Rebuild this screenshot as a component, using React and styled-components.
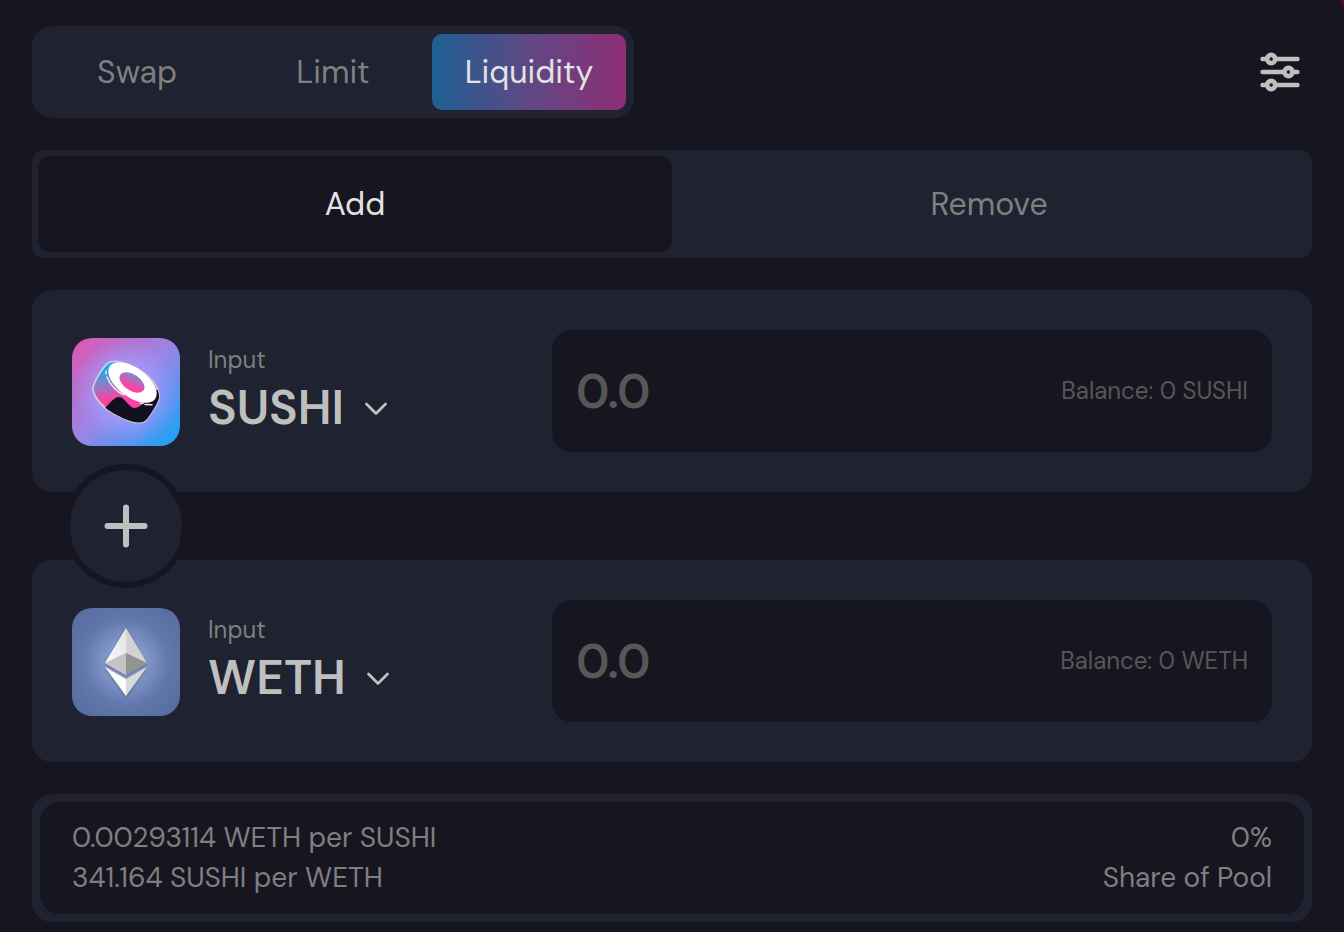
import React, { useState } from 'react';
import styled, { createGlobalStyle } from 'styled-components';

const GlobalStyle = createGlobalStyle`
  * {
    box-sizing: border-box;
  }

  body {
    background: linear-gradient(to right, #100d2a, #46083f);
    margin: 0;
  }

  button,
  input {
    background: none;
    border: 0;
    color: inherit;
    font: inherit;
    margin: 0;
    padding: 0;
  }

  button {
    cursor: pointer;
  }
`;

const Page = styled.main`
  background: #171520;
  border-radius: 4px 8px 0 0 / 6px 12px 0 0;
  color: #7f7f7f;
  display: flex;
  flex-direction: column;
  font-family: 'DM Sans', Inter, 'Liberation Sans', sans-serif;
  font-size: 28px;
  gap: 32px;
  line-height: 40px;
  min-height: 100vh;
  padding: 26px 32px 10px;
`;

const Header = styled.header`
  align-items: center;
  display: flex;
  justify-content: space-between;
`;

const Nav = styled.nav`
  background: #1f2230;
  border-radius: 20px;
  display: grid;
  gap: 2px;
  grid-template-columns: repeat(3, 1fr);
  padding: 8px;
`;

const NavLink = styled.a`
  background: ${({ $active }) =>
    $active ? 'linear-gradient(to right, #1f6093, #5f4783 50%, #8f2f76)' : 'none'};
  border-radius: 10px;
  color: ${({ $active }) => ($active ? '#e3e3e3' : '#7f7f7f')};
  font-size: 32px;
  min-width: 194px;
  padding: 18px 24px;
  text-align: center;
  text-decoration: none;
`;

const SettingsButton = styled.button`
  color: #bfbfbf;
  display: flex;
  padding: 12px;
`;

const ModeSwitch = styled.div`
  background: #1f2230;
  border-radius: 12px;
  display: grid;
  grid-template-columns: 1fr 1fr;
  padding: 6px;
`;

const ModeButton = styled.button`
  background: ${({ $active }) => ($active ? '#171520' : 'none')};
  border-radius: 12px;
  color: ${({ $active }) => ($active ? '#e3e3e3' : '#7f7f7f')};
  font-size: 32px;
  padding: 28px;
`;

const Panels = styled.div`
  display: flex;
  flex-direction: column;
`;

const Panel = styled.section`
  align-items: start;
  background: #1f2230;
  border-radius: 20px;
  display: grid;
  grid-template-columns: minmax(0, 2fr) minmax(0, 3fr);
  padding: 40px;
`;

const Asset = styled.div`
  align-items: center;
  display: flex;
  gap: 28px;
  padding-top: 8px;
`;

const AssetText = styled.div`
  display: flex;
  flex-direction: column;
`;

const AssetLabel = styled.span`
  font-size: 24px;
  line-height: 32px;
`;

const AssetButton = styled.button`
  align-items: center;
  color: #bfbfbf;
  display: flex;
  font-size: 48px;
  font-weight: 600;
  gap: 20px;
  line-height: 64px;
`;

const Field = styled.label`
  align-items: center;
  background: #171520;
  border-radius: 20px;
  display: flex;
  gap: 16px;
  padding: 29px 24px;
`;

const AmountInput = styled.input`
  color: #bfbfbf;
  flex: 1;
  font-size: 48px;
  font-weight: 600;
  height: 64px;
  min-width: 0;
  outline: none;

  &::placeholder {
    color: #575757;
    opacity: 1;
  }
`;

const Balance = styled.span`
  color: #575757;
  font-size: 24px;
  white-space: nowrap;
`;

const PlusButton = styled.button`
  align-items: center;
  background: #1f2230;
  border: 6px solid #171520;
  border-radius: 50%;
  color: #bfbfbf;
  display: flex;
  height: 124px;
  justify-content: center;
  margin: -28px 32px;
  width: 124px;
  z-index: 1;
`;

const Rates = styled.footer`
  background: #1f2230;
  border-radius: 20px;
  padding: 8px;
`;

const RatesInner = styled.div`
  background: #171520;
  border-radius: 20px;
  display: flex;
  justify-content: space-between;
  padding: 16px 32px;
`;

const RatesColumn = styled.div`
  text-align: ${({ $align }) => $align || 'left'};
`;

const Logo = styled.svg`
  border-radius: 20px;
  flex: none;
`;

const SlidersIcon = () => (
  <svg width="40" height="40" viewBox="0 0 40 40" fill="none" stroke="currentColor" strokeWidth="4.6" strokeLinecap="round" aria-hidden="true">
    <path d="M2.600 7h4.400M15 7h22.400M2.600 20h21.400M32 20h5.400M2.600 33h4.400M15 33h22.400" />
    <circle cx="11.2" cy="7" r="4.1" />
    <circle cx="28.5" cy="20" r="4.1" />
    <circle cx="11.2" cy="33" r="4.1" />
  </svg>
);

const ChevronIcon = () => (
  <svg width="24" height="16" viewBox="0 0 24 16" fill="none" stroke="currentColor" strokeWidth="2.8" strokeLinecap="round" strokeLinejoin="round" aria-hidden="true">
    <path d="M2.5 4 12 13.500 21.500 4" />
  </svg>
);

const PlusIcon = () => (
  <svg width="44" height="44" viewBox="0 0 44 44" fill="none" stroke="currentColor" strokeWidth="6" strokeLinecap="round" aria-hidden="true">
    <path d="M22 3.500v37M3.500 22h37" />
  </svg>
);

const SushiLogo = () => (
  <Logo width="108" height="108" viewBox="0 0 108 108" aria-hidden="true">
    <defs>
      <linearGradient id="sushi-bg" x1="0" y1="0" x2="1" y2="1">
        <stop offset="0" stopColor="#e055b0" />
        <stop offset="0.5" stopColor="#9a85e4" />
        <stop offset="1" stopColor="#0fa6f6" />
      </linearGradient>
      <radialGradient id="sushi-glow">
        <stop offset="0" stopColor="#b0a8ff" />
        <stop offset="0.5" stopColor="#a5a0ff" stopOpacity="0.7" />
        <stop offset="1" stopColor="#9a98ff" stopOpacity="0" />
      </radialGradient>
      <linearGradient id="sushi-side" x1="0.3" y1="0" x2="0.45" y2="0.75">
        <stop offset="0.1" stopColor="#08aff0" />
        <stop offset="0.45" stopColor="#8a80c8" />
        <stop offset="0.8" stopColor="#ff40a0" />
      </linearGradient>
      <linearGradient id="sushi-hole" x1="0.3" y1="0" x2="0.6" y2="1">
        <stop offset="0.1" stopColor="#8585c8" />
        <stop offset="0.75" stopColor="#fa45a2" />
      </linearGradient>
      <clipPath id="sushi-body">
        <path d="M36 25C42 21 57 25 69 33C80 40 88 51 87 60C85 67 78 77 74 82C68 88 53 82 41 75C29 68 21 58 21 50C22 44 30 30 36 25Z" />
      </clipPath>
    </defs>
    <path fill="url(#sushi-bg)" d="M0 0h108v108H0z" />
    <circle cx="54" cy="54" r="54" fill="url(#sushi-glow)" />
    <path fill="url(#sushi-side)" stroke="#d2c9dc" strokeWidth="1.800" d="M36 25C42 21 57 25 69 33C80 40 88 51 87 60C85 67 78 77 74 82C68 88 53 82 41 75C29 68 21 58 21 50C22 44 30 30 36 25Z" />
    <path clipPath="url(#sushi-body)" fill="#11101f" d="M33 70C38 65 42 59 47 59C53 59 56 69 62 70C69 70 70 63 76 64C82 64 85 59 84 52H91V92H30Z" />
    <ellipse cx="60.500" cy="44.500" rx="28" ry="14.500" transform="rotate(36 60.500 44.500)" fill="#fff" />
    <ellipse cx="60" cy="44.500" rx="14" ry="8" transform="rotate(33 60 44.500)" fill="url(#sushi-hole)" />
    <path d="M34 33v3M35 39C38 47 45 54 52 57M68 65l3 .5M73 66.500l7 .2" fill="none" stroke="#f5dff0" strokeWidth="1.500" strokeLinecap="round" />
  </Logo>
);

const EthLogo = () => (
  <Logo width="108" height="108" viewBox="0 0 108 108" aria-hidden="true">
    <defs>
      <radialGradient id="eth-bg" r="0.72">
        <stop offset="0" stopColor="#9fb2de" />
        <stop offset="0.25" stopColor="#8399ca" />
        <stop offset="0.55" stopColor="#6278ad" />
        <stop offset="1" stopColor="#536899" />
      </radialGradient>
      <linearGradient id="eth-left" x1="0" y1="1" x2="1" y2="0">
        <stop offset="0" stopColor="#fff" />
        <stop offset="1" stopColor="#e2e2e2" />
      </linearGradient>
      <filter id="eth-shadow" x="-0.3" y="-0.3" width="1.6" height="1.6">
        <feDropShadow dx="0" dy="1" stdDeviation="1" floodColor="#2d3d66" floodOpacity="0.7" />
      </filter>
    </defs>
    <path fill="url(#eth-bg)" d="M0 0h108v108H0z" />
    <g filter="url(#eth-shadow)">
      <path fill="url(#eth-left)" d="M54 20 33 55l21 12z" />
      <path fill="#d3d3d3" d="m54 20 21 35-21 12z" />
      <path fill="#c4c4c4" d="m33 55 21-10v22z" />
      <path fill="#929292" d="M75 55 54 45v22z" />
      <path fill="#fafafa" d="m33 59 21 12v17z" />
      <path fill="#d9d9d9" d="M75 59 54 71v17z" />
    </g>
  </Logo>
);

const tabs = ['Swap', 'Limit', 'Liquidity'];
const modes = ['Add', 'Remove'];

const CurrencyPanel = ({ symbol, logo }) => {
  const [amount, setAmount] = useState('');

  return (
    <Panel>
      <Asset>
        {logo}
        <AssetText>
          <AssetLabel>Input</AssetLabel>
          <AssetButton type="button">
            {symbol}
            <ChevronIcon />
          </AssetButton>
        </AssetText>
      </Asset>
      <Field>
        <AmountInput
          aria-label={`${symbol} amount`}
          inputMode="decimal"
          placeholder="0.0"
          value={amount}
          onChange={(e) => setAmount(e.target.value)}
        />
        <Balance>Balance: 0 {symbol}</Balance>
      </Field>
    </Panel>
  );
};

const App = () => {
  const [mode, setMode] = useState('Add');

  return (
    <>
      <GlobalStyle />
      <Page>
        <Header>
          <Nav aria-label="Trade">
            {tabs.map((tab) => (
              <NavLink key={tab} href={`#${tab.toLowerCase()}`} $active={tab === 'Liquidity'}>
                {tab}
              </NavLink>
            ))}
          </Nav>
          <SettingsButton type="button" aria-label="Settings">
            <SlidersIcon />
          </SettingsButton>
        </Header>
        <ModeSwitch>
          {modes.map((name) => (
            <ModeButton
              key={name}
              type="button"
              aria-pressed={mode === name}
              $active={mode === name}
              onClick={() => setMode(name)}
            >
              {name}
            </ModeButton>
          ))}
        </ModeSwitch>
        <Panels>
          <CurrencyPanel symbol="SUSHI" logo={<SushiLogo />} />
          <PlusButton type="button" aria-label="Add liquidity">
            <PlusIcon />
          </PlusButton>
          <CurrencyPanel symbol="WETH" logo={<EthLogo />} />
        </Panels>
        <Rates>
          <RatesInner>
            <RatesColumn>
              <div>0.00293114 WETH per SUSHI</div>
              <div>341.164 SUSHI per WETH</div>
            </RatesColumn>
            <RatesColumn $align="right">
              <div>0%</div>
              <div>Share of Pool</div>
            </RatesColumn>
          </RatesInner>
        </Rates>
      </Page>
    </>
  );
};

export default App;
